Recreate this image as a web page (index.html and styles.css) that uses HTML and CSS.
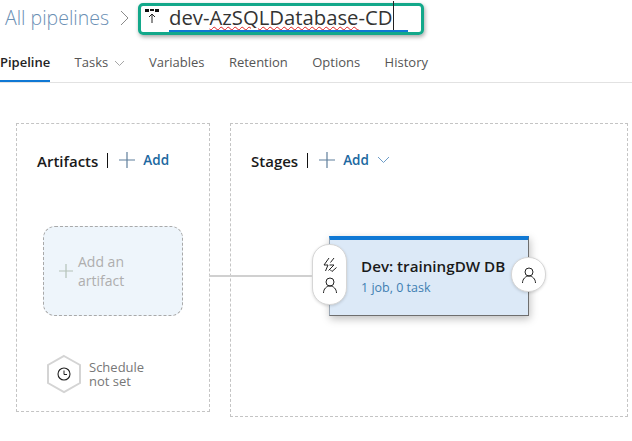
FILE: index.html
```html
<!DOCTYPE html>
<html lang="en">
<head>
    <meta charset="UTF-8">
    <meta name="viewport" content="width=device-width, initial-scale=1.0">
    <title>dev-AzSQLDatabase-CD</title>
    <link rel="stylesheet" href="styles.css">
</head>
<body>
    <header class="title-row">
        <span class="crumb">All pipelines</span>
        <svg class="crumb-chevron" width="9" height="16" viewBox="0 0 9 16"><path d="M1 1l7 7-7 7" fill="none" stroke="#8a8a8a" stroke-width="1"/></svg>
        <div class="name-box">
            <svg class="name-icon" width="14" height="15" viewBox="0 0 14 15">
                <path d="M0 0h4v3H0zM5 0h4v2H5zM10 0h4v3h-4z" fill="#111"/>
                <path d="M7 14V5M4 8l3-3 3 3" fill="none" stroke="#222" stroke-width="1"/>
            </svg>
            <span class="name-text">dev-<span class="misspelled">AzSQLDatabase</span>-CD<span class="caret"></span></span>
        </div>
    </header>

    <nav class="tabs">
        <a class="tab tab-active">Pipeline</a>
        <a class="tab tab-tasks">Tasks <svg width="11" height="7" viewBox="0 0 11 7"><path d="M1 1l4.500 4.500L10 1" fill="none" stroke="#a6a6a6"/></svg></a>
        <a class="tab">Variables</a>
        <a class="tab">Retention</a>
        <a class="tab">Options</a>
        <a class="tab">History</a>
    </nav>

    <main class="canvas">
        <section class="panel panel-artifacts">
            <div class="panel-head">
                <span class="panel-title">Artifacts</span>
                <span class="divider"></span>
                <svg class="plus" width="16" height="16" viewBox="0 0 16 16"><path d="M8 0v16M0 8h16" stroke="#5f7f9c" stroke-width="1.200"/></svg>
                <span class="add">Add</span>
            </div>
            <div class="artifact-box">
                <svg width="14" height="14" viewBox="0 0 14 14"><path d="M7 0v14M0 7h14" stroke="#b4c2b8" stroke-width="1.200"/></svg>
                <span class="artifact-text">Add an<br>artifact</span>
            </div>
            <div class="schedule">
                <svg width="36" height="40" viewBox="0 0 36 40">
                    <path d="M18 2l16 9v18l-16 9-16-9V11z" fill="#fff" stroke="#d4d4d4" stroke-width="2"/>
                    <circle cx="18" cy="20" r="6" fill="none" stroke="#222" stroke-width="1.100"/>
                    <path d="M18 16.500V20.500h3" fill="none" stroke="#222" stroke-width="1"/>
                </svg>
                <span class="schedule-text">Schedule<br>not set</span>
            </div>
        </section>

        <section class="panel panel-stages">
            <div class="panel-head">
                <span class="panel-title">Stages</span>
                <span class="divider"></span>
                <svg class="plus" width="16" height="16" viewBox="0 0 16 16"><path d="M8 0v16M0 8h16" stroke="#5f7f9c" stroke-width="1.200"/></svg>
                <span class="add">Add</span>
                <svg class="add-chevron" width="13" height="8" viewBox="0 0 13 8"><path d="M1 1l5.500 5.500L12 1" fill="none" stroke="#6c9cc8"/></svg>
            </div>
            <div class="stage-card">
                <div class="stage-name">Dev: trainingDW DB</div>
                <div class="stage-meta">1 job, 0 task</div>
                <div class="pill pill-pre">
                    <svg width="16" height="16" viewBox="0 0 16 16"><path d="M7 1L2 8h4l-2.500 6M12 1L8.500 5.500M7.500 8H12L6.500 13.500M8 12.500l2 2 4.500-4" fill="none" stroke="#222" stroke-width="1"/></svg>
                    <svg width="16" height="16" viewBox="0 0 16 16"><circle cx="8" cy="5" r="4" fill="none" stroke="#222" stroke-width="1"/><path d="M1.500 16c0-4 3-7 6.500-7s6.500 3 6.500 7" fill="none" stroke="#222" stroke-width="1"/></svg>
                </div>
                <div class="pill pill-post">
                    <svg width="16" height="16" viewBox="0 0 16 16"><circle cx="8" cy="5" r="4" fill="none" stroke="#222" stroke-width="1"/><path d="M1.500 16c0-4 3-7 6.500-7s6.500 3 6.500 7" fill="none" stroke="#222" stroke-width="1"/></svg>
                </div>
            </div>
        </section>
        <div class="connector"></div>
    </main>
</body>
</html>
```

FILE: styles.css
```css
body {
    font-family: "Open Sans", "Noto Sans", sans-serif;
    margin: 0;
    padding: 0;
    background: white;
    color: #222;
    height: 441px;
    overflow: hidden;
}
.title-row {
    display: flex;
    align-items: center;
    height: 38px;
    padding-left: 5px;
}
.crumb {
    font-size: 19.500px;
    color: #6a8fb4;
    font-weight: 300;
    width: 111px;
    margin-top: -3px;
}
.crumb-chevron {
    margin: -3px 9px 0 4px;
}
.name-box {
    box-sizing: border-box;
    width: 286px;
    height: 32px;
    margin-top: -1px;
    border: 3px solid #13a88a;
    border-radius: 5px;
    box-shadow: 1px 2px 4px rgba(0, 0, 0, 0.35);
    display: flex;
    align-items: center;
    padding-left: 4px;
    position: relative;
}
.name-icon {
    margin-right: 10px;
    margin-top: -4px;
}
.name-text {
    font-size: 20.300px;
    color: #333;
    position: relative;
    white-space: nowrap;
    line-height: 26px;
    margin-top: -3px;
}
.misspelled {
    text-decoration: underline wavy #e02020 1px;
    text-underline-offset: 1px;
}
.name-box::after {
    content: "";
    position: absolute;
    left: 28px;
    top: 24px;
    width: 239px;
    height: 2px;
    background: #0f78d4;
}
.caret {
    position: absolute;
    right: -1px;
    top: -3px;
    width: 1px;
    height: 29px;
    background: #222;
}
.tabs {
    display: flex;
    height: 45px;
    border-bottom: 1px solid #e2e2e2;
    box-sizing: border-box;
    font-size: 13px;
    color: #555;
    margin-bottom: 40px;
}
.tab {
    display: block;
    line-height: 48px;
    margin-right: 24.400px;
    height: 44px;
}
.tab-active {
    font-weight: 600;
    color: #222;
    border-bottom: 2px solid #0f78d4;
    box-sizing: border-box;
}
.tab-tasks svg {
    margin-left: 2px;
}
.canvas {
    display: flex;
    align-items: flex-start;
    padding-left: 16px;
    gap: 20px;
    position: relative;
}
.panel {
    box-sizing: border-box;
    border: 1px dashed #c4c4c4;
}
.panel-artifacts {
    width: 194px;
    height: 289px;
    padding: 26px 0 0 20px;
}
.panel-stages {
    width: 398px;
    height: 294px;
    padding: 26px 0 0 20px;
}
.panel-head {
    display: flex;
    align-items: center;
    height: 20px;
}
.panel-title {
    font-size: 15px;
    font-weight: 600;
    color: #1a1a1a;
    margin-top: 2px;
}
.divider {
    width: 1px;
    height: 15px;
    background: #111;
    margin: 0 11px 0 9px;
}
.add {
    font-size: 13.500px;
    font-weight: 600;
    color: #20689f;
    margin-left: 8px;
}
.add-chevron {
    margin-left: 8px;
}
.artifact-box {
    box-sizing: border-box;
    width: 140px;
    height: 90px;
    margin: 56px 0 0 6px;
    background: #eef5fb;
    border: 1px dashed #a9a9a9;
    border-radius: 12px;
    display: flex;
    align-items: center;
    padding-left: 15px;
    gap: 5px;
}
.artifact-text {
    font-size: 14px;
    line-height: 19px;
    color: #aeaeae;
}
.schedule {
    display: flex;
    align-items: center;
    margin: 38px 0 0 9px;
    gap: 7px;
}
.schedule-text {
    font-size: 13px;
    line-height: 14px;
    color: #777;
}
.stage-card {
    position: absolute;
    left: 329px;
    top: 113px;
    box-sizing: border-box;
    width: 200px;
    height: 80px;
    background: #dce9f7;
    border: 1px solid #6e6e6e;
    border-top: 4px solid #0f78d4;
    border-left-color: #9aa7b5;
    box-shadow: 1px 3px 8px rgba(0, 0, 0, 0.25);
    padding: 15px 0 0 31px;
}
.stage-name {
    font-size: 15.200px;
    font-weight: 600;
    color: #1a1a1a;
    line-height: 22px;
    white-space: nowrap;
}
.stage-meta {
    font-size: 12.500px;
    color: #3f7fb2;
    line-height: 21px;
}
.pill {
    position: absolute;
    background: white;
    border: 1px solid #d6d6d6;
    box-sizing: border-box;
    box-shadow: 0 1px 3px rgba(0, 0, 0, 0.15);
    display: flex;
    flex-direction: column;
    align-items: center;
    justify-content: center;
    border-radius: 17px;
}
.pill-pre {
    left: -18px;
    top: 4px;
    width: 35px;
    height: 61px;
    gap: 4px;
}
.pill-post {
    right: -18px;
    top: 17px;
    width: 35px;
    height: 35px;
}
.connector {
    position: absolute;
    left: 209px;
    top: 152px;
    width: 103px;
    height: 2px;
    background: #d0d0d0;
}
```
